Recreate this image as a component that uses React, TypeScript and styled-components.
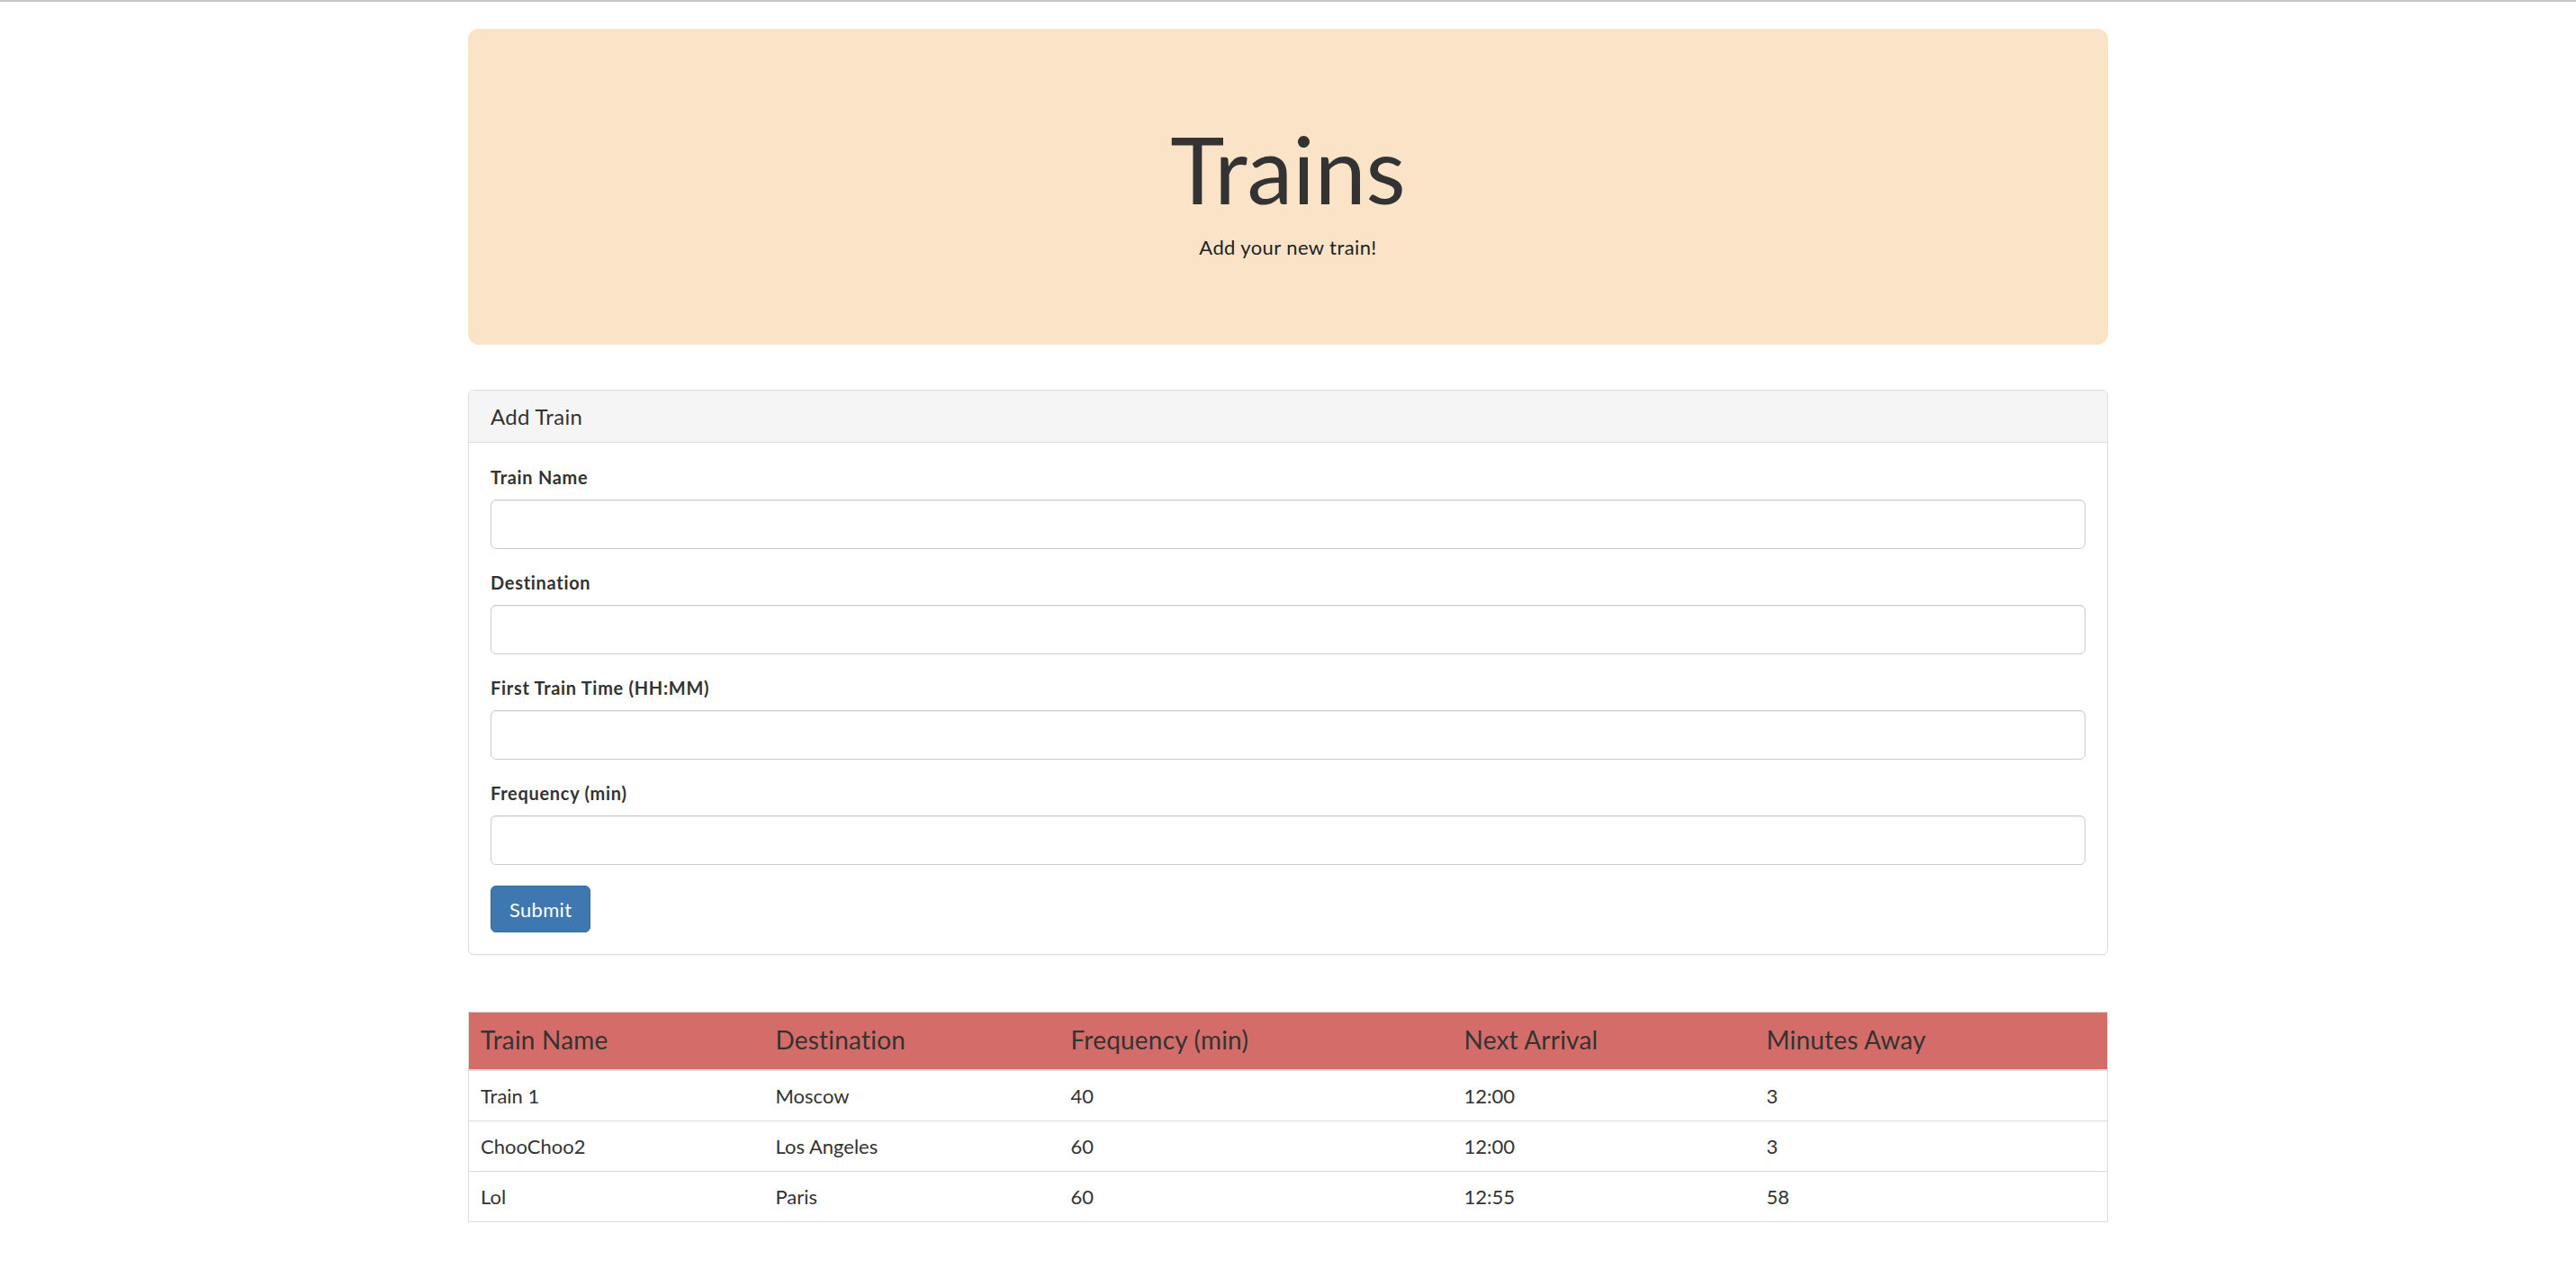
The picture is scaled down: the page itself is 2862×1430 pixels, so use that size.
import React from 'react'
import styled, { createGlobalStyle } from 'styled-components'

const GlobalStyle = createGlobalStyle`
  html, body {
    margin: 0;
    padding: 0;
    background: #ffffff;
  }

  body {
    font-family: Lato, 'Open Sans', 'Liberation Sans', sans-serif;
    font-size: 20px;
    line-height: 1.43;
    color: #333333;
  }

  * {
    box-sizing: border-box;
  }
`

const TopRule = styled.div`
  height: 2px;
  background: #c4c4c4;
`

const Container = styled.div`
  width: 1822px;
  margin: 0 auto;
  padding-bottom: 60px;
`

const Jumbotron = styled.header`
  margin-top: 30px;
  padding: 105px 24px 92px;
  background: #fae3c7;
  border-radius: 12px;
  text-align: center;
`

const Title = styled.h1`
  margin: 0;
  font-size: 102px;
  font-weight: 400;
  line-height: 1;
  color: #333333;
`

const Subtitle = styled.p`
  margin: 21px 0 0;
  font-size: 22px;
  line-height: 1.4;
  letter-spacing: 0.4px;
  color: #222222;
`

const Panel = styled.section`
  margin-top: 50px;
  border: 1px solid #dddddd;
  border-radius: 6px;
  box-shadow: 0 1px 2px rgba(0, 0, 0, 0.05);
  overflow: hidden;
`

const PanelHeading = styled.div`
  padding: 12px 24px;
  background: #f5f5f5;
  border-bottom: 1px solid #dddddd;
  font-size: 24px;
  line-height: 1.4;
  letter-spacing: 0.3px;
  color: #333333;
`

const PanelBody = styled.form`
  padding: 24px;
`

const FormGroup = styled.div`
  margin-bottom: 23px;
`

const Label = styled.label`
  display: block;
  margin-bottom: 10px;
  font-size: 20px;
  font-weight: 700;
  line-height: 29px;
  letter-spacing: 0.7px;
  color: #333333;
`

const Input = styled.input`
  display: block;
  width: 100%;
  height: 55px;
  padding: 8px 18px;
  font-family: inherit;
  font-size: 20px;
  color: #555555;
  background: #ffffff;
  border: 1px solid #cccccc;
  border-radius: 6px;
  box-shadow: inset 0 1px 1px rgba(0, 0, 0, 0.075);
  outline: none;
`

const SubmitButton = styled.button`
  height: 52px;
  padding: 0 20px;
  font-family: inherit;
  font-size: 22px;
  letter-spacing: 0.3px;
  color: #ffffff;
  background: #3f77b1;
  border: 1px solid #2e6da4;
  border-radius: 6px;
  cursor: pointer;
`

const Table = styled.table`
  width: 100%;
  margin-top: 63px;
  border-collapse: collapse;
  border: 1px solid #dddddd;
`

const HeadCell = styled.th<{ $width?: number }>`
  width: ${p => (p.$width ? `${p.$width}px` : 'auto')};
  padding: 10px 13px 13px;
  background: #d46d69;
  border-bottom: 2px solid #dddddd;
  font-size: 28px;
  font-weight: 400;
  line-height: 40px;
  letter-spacing: 0.2px;
  color: #333333;
  text-align: left;
`

const Row = styled.tr`
  border-top: 1px solid #dddddd;
`

const Cell = styled.td`
  padding: 12px 13px;
  font-size: 22px;
  line-height: 31px;
  color: #333333;
`

const columns: { label: string; width?: number }[] = [
  { label: 'Train Name', width: 328 },
  { label: 'Destination', width: 328 },
  { label: 'Frequency (min)', width: 437 },
  { label: 'Next Arrival', width: 336 },
  { label: 'Minutes Away' },
]

const trains = [
  { name: 'Train 1', destination: 'Moscow', frequency: 40, next: '12:00', away: 3 },
  { name: 'ChooChoo2', destination: 'Los Angeles', frequency: 60, next: '12:00', away: 3 },
  { name: 'Lol', destination: 'Paris', frequency: 60, next: '12:55', away: 58 },
]

const fields = [
  { id: 'train-name', label: 'Train Name' },
  { id: 'destination', label: 'Destination' },
  { id: 'first-time', label: 'First Train Time (HH:MM)' },
  { id: 'frequency', label: 'Frequency (min)' },
]

const App: React.FC = () => {
  return (
    <>
      <GlobalStyle />
      <TopRule />
      <Container>
        <Jumbotron>
          <Title>Trains</Title>
          <Subtitle>Add your new train!</Subtitle>
        </Jumbotron>

        <Panel>
          <PanelHeading>Add Train</PanelHeading>
          <PanelBody onSubmit={e => e.preventDefault()}>
            {fields.map(field => (
              <FormGroup key={field.id}>
                <Label htmlFor={field.id}>{field.label}</Label>
                <Input id={field.id} type="text" />
              </FormGroup>
            ))}
            <SubmitButton type="submit">Submit</SubmitButton>
          </PanelBody>
        </Panel>

        <Table>
          <thead>
            <tr>
              {columns.map(col => (
                <HeadCell key={col.label} $width={col.width}>{col.label}</HeadCell>
              ))}
            </tr>
          </thead>
          <tbody>
            {trains.map(train => (
              <Row key={train.name}>
                <Cell>{train.name}</Cell>
                <Cell>{train.destination}</Cell>
                <Cell>{train.frequency}</Cell>
                <Cell>{train.next}</Cell>
                <Cell>{train.away}</Cell>
              </Row>
            ))}
          </tbody>
        </Table>
      </Container>
    </>
  )
}

export default App
